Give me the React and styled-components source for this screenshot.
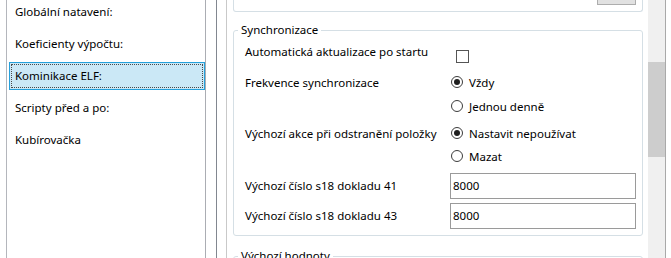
import React from "react";
import styled, { createGlobalStyle } from "styled-components";

const Global = createGlobalStyle`
  html, body { margin: 0; padding: 0; background: #fff; overflow: hidden; }
  body { font-family: "Noto Sans", "Segoe UI", sans-serif; font-size: 11.5px; color: #000; }
  * { box-sizing: border-box; }
`;

const Page = styled.div`
  display: flex;
  width: 671px;
  height: 258px;
  overflow: hidden;
  background: #fff;
`;

const LeftPane = styled.div`
  padding-left: 6px;
  height: 100%;
`;

const ListBox = styled.div`
  width: 200px;
  height: 100%;
  border-left: 1px solid #b4b6bc;
  border-right: 1px solid #abadb3;
  overflow: hidden;
`;

const List = styled.div`
  display: flex;
  flex-direction: column;
  gap: 4px;
  margin-top: -2px;
`;

const Item = styled.div`
  position: relative;
  height: 28px;
  margin-left: 2px;
  display: flex;
  align-items: center;
  padding-left: 5px;
  line-height: 16px;
  border: 1px solid ${(p) => (p.$selected ? "#26a0da" : "transparent")};
  background: ${(p) => (p.$selected ? "#cbe8f6" : "transparent")};
  white-space: nowrap;
  &::after {
    content: "";
    display: ${(p) => (p.$selected ? "block" : "none")};
    position: absolute;
    inset: 1px;
    border: 1px dotted #4a4a4a;
  }
`;

const Splitter = styled.div`
  margin-left: 10px;
  width: 10px;
  height: 100%;
  border-left: 1px solid #828790;
`;

const RightPane = styled.div`
  display: flex;
  width: 440px;
  height: 100%;
  border-left: 1px solid #c9c9c9;
  border-right: 1px solid #a9a9a9;
`;

const Content = styled.div`
  flex: 1;
  padding: 0 5px 0 6px;
  overflow: hidden;
`;

const Scrollbar = styled.div`
  width: 17px;
  height: 100%;
  background: #f0f0f0;
  padding-top: 62px;
`;

const Thumb = styled.div`
  width: 17px;
  height: 95px;
  background: #cdcdcd;
`;

const TopBox = styled.div`
  height: 12px;
  border: 1px solid #d5dfe5;
  border-top: none;
  border-radius: 0 0 3px 3px;
  display: flex;
  justify-content: flex-end;
  align-items: flex-end;
  padding: 0 6px 6px 0;
`;

const TopButton = styled.div`
  width: 39px;
  height: 5px;
  background: #e1e1e1;
  border: 1px solid #adadad;
  border-top: none;
`;

const Group = styled.fieldset`
  margin: ${(p) => p.$mt}px 0 0 0;
  padding: 0;
  border: 1px solid #d5dfe5;
  border-radius: 3px;
  min-width: 0;
`;

const Legend = styled.legend`
  margin-left: 4px;
  padding: 0 3px;
  line-height: 16px;
`;

const Form = styled.div`
  display: flex;
  flex-direction: column;
  padding: 2px 0 6px 11px;
  min-height: ${(p) => p.$minh || 0}px;
`;

const Row = styled.div`
  display: grid;
  grid-template-columns: 205px 186px;
  margin-top: ${(p) => p.$mt || 0}px;
  height: ${(p) => p.$h}px;
  align-items: ${(p) => p.$align || "start"};
`;

const Label = styled.div`
  line-height: 24px;
  white-space: nowrap;
`;

const Options = styled.div`
  display: flex;
  flex-direction: column;
`;

const Option = styled.div`
  display: flex;
  align-items: center;
  height: ${(p) => p.$h}px;
  padding-left: 1px;
  line-height: 16px;
  white-space: nowrap;
`;

const Radio = styled.span`
  width: 12px;
  height: 12px;
  border-radius: 50%;
  border: 1px solid #3c3c3c;
  margin-right: 6px;
  margin-top: -2px;
  display: flex;
  align-items: center;
  justify-content: center;
  background: #fff;
  &::before {
    content: "";
    width: 6px;
    height: 6px;
    border-radius: 50%;
    background: #1e1e1e;
    display: ${(p) => (p.$checked ? "block" : "none")};
  }
`;

const Checkbox = styled.span`
  width: 13px;
  height: 13px;
  border: 1px solid #555;
  margin: 10px 0 0 6px;
  background: #fff;
`;

const TextInput = styled.div`
  height: 26px;
  border: 1px solid #9a9a9a;
  padding: 0 2px;
  line-height: 24px;
  background: #fff;
`;

function RadioGroup({ options, checked, h }) {
  return (
    <Options>
      {options.map((o, i) => (
        <Option key={o} $h={h}>
          <Radio $checked={i === checked} />
          {o}
        </Option>
      ))}
    </Options>
  );
}

const items = [
  "Globální natavení:",
  "Koeficienty výpočtu:",
  "Kominikace ELF:",
  "Scripty před a po:",
  "Kubírovačka",
];

export default function App() {
  return (
    <>
      <Global />
      <Page>
        <LeftPane>
          <ListBox>
            <List>
              {items.map((t, i) => (
                <Item key={t} $selected={i === 2}>
                  {t}
                </Item>
              ))}
            </List>
          </ListBox>
        </LeftPane>
        <Splitter />
        <RightPane>
          <Content>
            <TopBox>
              <TopButton />
            </TopBox>
            <Group $mt={10}>
              <Legend>Synchronizace</Legend>
              <Form>
                <Row $h={24}>
                  <Label>Automatická aktualizace po startu</Label>
                  <Checkbox />
                </Row>
                <Row $h={48} $mt={7}>
                  <Label>Frekvence synchronizace</Label>
                  <RadioGroup options={["Vždy", "Jednou denně"]} checked={0} h={24} />
                </Row>
                <Row $h={46} $mt={3}>
                  <Label>Výchozí akce při odstranění položky</Label>
                  <RadioGroup options={["Nastavit nepoužívat", "Mazat"]} checked={0} h={23} />
                </Row>
                <Row $h={26} $mt={5} $align="center">
                  <Label>Výchozí číslo s18 dokladu 41</Label>
                  <TextInput>8000</TextInput>
                </Row>
                <Row $h={26} $mt={4} $align="center">
                  <Label>Výchozí číslo s18 dokladu 43</Label>
                  <TextInput>8000</TextInput>
                </Row>
              </Form>
            </Group>
            <Group $mt={12}>
              <Legend>Výchozí hodnoty</Legend>
              <Form $minh={60} />
            </Group>
          </Content>
          <Scrollbar>
            <Thumb />
          </Scrollbar>
        </RightPane>
      </Page>
    </>
  );
}
